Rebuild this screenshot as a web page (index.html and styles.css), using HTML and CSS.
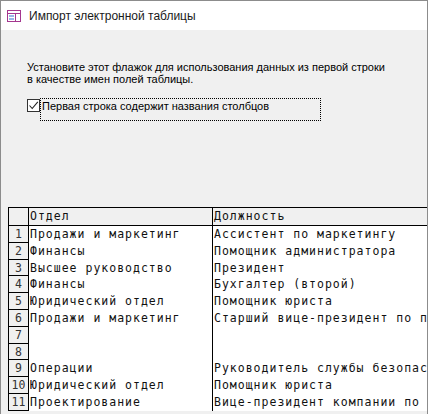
FILE: index.html
```html
<!DOCTYPE html>
<html>
<head>
<meta charset="utf-8">
<link rel="stylesheet" href="styles.css">
</head>
<body>
<div class="window">
  <div class="titlebar">
    <svg class="appicon" width="14" height="12" viewBox="0 0 14 12">
      <rect x="0.5" y="0.5" width="13" height="11" fill="#fff" stroke="#a4378f"/>
      <line x1="0.5" y1="3.5" x2="13.5" y2="3.5" stroke="#a4378f"/>
      <line x1="8.5" y1="3.5" x2="8.5" y2="11.5" stroke="#a4378f"/>
      <line x1="2" y1="6" x2="7" y2="6" stroke="#2f6fd1"/>
      <line x1="2" y1="9" x2="7" y2="9" stroke="#2f6fd1"/>
    </svg>
    <span class="title">Импорт электронной таблицы</span>
  </div>
  <div class="content">
    <p class="intro">Установите этот флажок для использования данных из первой строки<br>в качестве имен полей таблицы.</p>
    <div class="checkrow">
      <span class="checkbox">
        <svg width="11" height="11" viewBox="0 0 11 11"><path d="M1.5 5.5 L4.2 8.5 L9.8 1.8" fill="none" stroke="#222" stroke-width="1.1"/></svg>
      </span>
      <span class="focus">Первая строка содержит названия столбцов</span>
    </div>
    <div class="grid">
      <div class="row head"><div class="rn"></div><div class="c1">Отдел</div><div class="c2">Должность</div></div>
      <div class="row"><div class="rn">1</div><div class="c1">Продажи и маркетинг</div><div class="c2">Ассистент по маркетингу</div></div>
      <div class="row"><div class="rn">2</div><div class="c1">Финансы</div><div class="c2">Помощник администратора</div></div>
      <div class="row"><div class="rn">3</div><div class="c1">Высшее руководство</div><div class="c2">Президент</div></div>
      <div class="row"><div class="rn">4</div><div class="c1">Финансы</div><div class="c2">Бухгалтер (второй)</div></div>
      <div class="row"><div class="rn">5</div><div class="c1">Юридический отдел</div><div class="c2">Помощник юриста</div></div>
      <div class="row"><div class="rn">6</div><div class="c1">Продажи и маркетинг</div><div class="c2">Старший вице-президент по продажам</div></div>
      <div class="row"><div class="rn">7</div><div class="c1"></div><div class="c2"></div></div>
      <div class="row"><div class="rn">8</div><div class="c1"></div><div class="c2"></div></div>
      <div class="row"><div class="rn">9</div><div class="c1">Операции</div><div class="c2">Руководитель службы безопасности</div></div>
      <div class="row"><div class="rn">10</div><div class="c1">Юридический отдел</div><div class="c2">Помощник юриста</div></div>
      <div class="row"><div class="rn">11</div><div class="c1">Проектирование</div><div class="c2">Вице-президент компании по проектированию</div></div>
    </div>
  </div>
</div>
</body>
</html>
```
FILE: styles.css
```css
html, body {
  margin: 0;
  padding: 0;
}
body {
  width: 428px;
  height: 414px;
  overflow: hidden;
  background: #f0f0f0;
  font-family: "Liberation Sans", Arial, sans-serif;
}
.window {
  box-sizing: border-box;
  width: 428px;
  height: 414px;
  border: 1px solid #8c8c8c;
  border-bottom: none;
  display: flex;
  flex-direction: column;
  overflow: hidden;
}
.titlebar {
  height: 29px;
  background: #fff;
  display: flex;
  align-items: center;
  padding-left: 6px;
  gap: 8px;
  flex: none;
}
.appicon { display: block; }
.title {
  font-size: 12px;
  color: #1a1a1a;
}
.content {
  flex: 1;
  background: #f0f0f0;
  padding-top: 31px;
  overflow: hidden;
}
.intro {
  margin: 0 0 0 26px;
  font-size: 11px;
  line-height: 12px;
  color: #000;
}
.checkrow {
  display: flex;
  align-items: flex-start;
  margin: 13px 0 0 26px;
}
.checkbox {
  box-sizing: border-box;
  width: 13px;
  height: 13px;
  border: 1px solid #333;
  background: #fff;
  display: flex;
  align-items: center;
  justify-content: center;
  margin-top: 1px;
}
.checkbox svg { display: block; }
.focus {
  box-sizing: border-box;
  width: 281px;
  height: 23px;
  border: 1px dotted #000;
  font-size: 11px;
  line-height: 12px;
  padding: 1px 0 0 1px;
  color: #000;
}
.grid {
  margin: 86px 0 0 7px;
  border-top: 1px solid #000;
  border-left: 1px solid #000;
  font-family: "DejaVu Sans Mono", monospace;
  font-size: 11.5px;
  letter-spacing: 1px;
  color: #111;
  background: #fff;
}
.row {
  display: flex;
  height: 16.8px;
  line-height: 17px;
  white-space: nowrap;
}
.row.head {
  background: #f0f0f0;
  box-sizing: border-box;
  height: 18px;
  border-bottom: 1px solid #000;
  line-height: 17px;
}
.rn {
  box-sizing: border-box;
  width: 20px;
  flex: none;
  background: #f0f0f0;
  border-right: 1px solid #000;
  border-bottom: 1px solid #000;
  text-align: center;
  color: #333;
  letter-spacing: 0;
}
.row.head .rn { border-bottom: none; }
.c1 {
  box-sizing: border-box;
  width: 184px;
  flex: none;
  border-right: 1px solid #000;
  padding-left: 1px;
  overflow: hidden;
}
.c2 {
  flex: 1;
  overflow: hidden;
  padding-left: 1px;
}
```
